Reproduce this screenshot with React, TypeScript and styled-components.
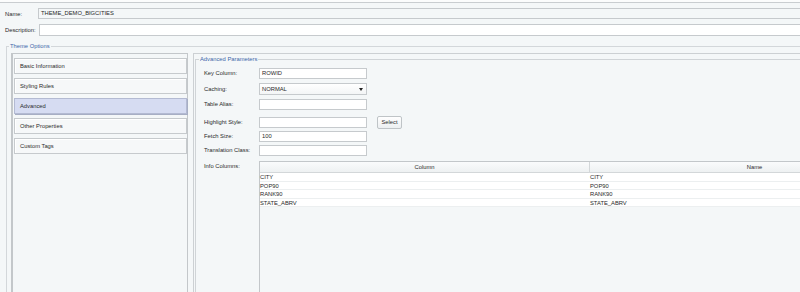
import styled, { createGlobalStyle } from 'styled-components'

const GlobalStyle = createGlobalStyle`
  html, body { margin: 0; padding: 0; background: #f4f7f8; }
  * { box-sizing: border-box; }
`

const FONT = `'Liberation Sans', Arial, sans-serif`
const BORDER = '#c6cacd'
const LEGEND = '#3d65a8'

const TABS = ['Basic Information', 'Styling Rules', 'Advanced', 'Other Properties', 'Custom Tags']
const INFO_ROWS = [
  { column: 'CITY', name: 'CITY' },
  { column: 'POP90', name: 'POP90' },
  { column: 'RANK90', name: 'RANK90' },
  { column: 'STATE_ABRV', name: 'STATE_ABRV' },
]

export default function App() {
  return (
    <>
      <GlobalStyle />
      <Page>
        <TopStrip />

        {/* Header fields */}
        <FieldRow $top={5}>
          <FieldLabel $width={33}>Name:</FieldLabel>
          <TextBox $height={11} $readOnly>THEME_DEMO_BIGCITIES</TextBox>
        </FieldRow>
        <FieldRow $top={5}>
          <FieldLabel $width={34}>Description:</FieldLabel>
          <TextBox $height={12} />
        </FieldRow>

        <ThemeSet>
          <Legend $shift={-2}>Theme Options</Legend>
          <Split>
            <TabList>
              {TABS.map(t => (
                <Tab key={t} $active={t === 'Advanced'}>{t}</Tab>
              ))}
            </TabList>

            <DetailPane>
              <ParamSet>
                <Legend $shift={-5}>Advanced Parameters</Legend>
                <Form>
                  <Label>Key Column:</Label>
                  <Input>ROWID</Input>
                  <span />

                  <Label $h={12}>Caching:</Label>
                  <Dropdown>
                    NORMAL
                    <Caret />
                  </Dropdown>
                  <span />

                  <Label>Table Alias:</Label>
                  <Input />
                  <span />

                  <Label $offset={1}>Highlight Style:</Label>
                  <Input $offset={1} />
                  <Button>Select</Button>

                  <Label>Fetch Size:</Label>
                  <Input>100</Input>
                  <span />

                  <Label>Translation Class:</Label>
                  <Input />
                  <span />

                  <Label>Info Columns:</Label>
                  <Grid>
                    <GridHead>
                      <HeadCell>Column</HeadCell>
                      <HeadCell>Name</HeadCell>
                    </GridHead>
                    {INFO_ROWS.map(r => (
                      <GridRow key={r.column}>
                        <Cell>{r.column}</Cell>
                        <Cell>{r.name}</Cell>
                      </GridRow>
                    ))}
                  </Grid>
                </Form>
              </ParamSet>
            </DetailPane>
          </Split>
        </ThemeSet>
      </Page>
    </>
  )
}

const Page = styled.div`
  width: 800px;
  height: 292px;
  overflow: hidden;
  background: #f4f7f8;
  font-family: ${FONT};
  font-size: 5.8px;
  color: #2a2a2a;
`

const TopStrip = styled.div`
  height: 3px;
  background: #fbfcfc;
  border-bottom: 1px solid #c9cdd0;
`

const FieldRow = styled.div<{ $top: number }>`
  display: flex;
  align-items: center;
  margin-top: ${p => p.$top}px;
  margin-right: -6px;
  padding-left: 5px;
`

const FieldLabel = styled.span<{ $width: number }>`
  width: ${p => p.$width}px;
  flex: none;
  white-space: nowrap;
`

const TextBox = styled.div<{ $height: number; $readOnly?: boolean }>`
  flex: 1;
  height: ${p => p.$height}px;
  line-height: ${p => p.$height - 2}px;
  padding-left: 2px;
  border: 1px solid ${BORDER};
  background: ${p => (p.$readOnly ? '#f4f7f8' : '#ffffff')};
`

const ThemeSet = styled.fieldset`
  margin: 6px -20px 0 6px;
  padding: 3px 0 0 4px;
  border: 1px solid #d3d7da;
  border-bottom: none;
  min-width: 0;
`

const Legend = styled.legend<{ $shift: number }>`
  margin-left: ${p => p.$shift}px;
  padding: 0 1px;
  line-height: 8px;
  color: ${LEGEND};
`

const Split = styled.div`
  display: flex;
  gap: 5px;
  height: 320px;
`

const TabList = styled.div`
  width: 177px;
  flex: none;
  display: flex;
  flex-direction: column;
  gap: 4px;
  padding: 4px 0 0 1px;
  border: 1px solid #c3c7ca;
  border-left-width: 2px;
  background: #f4f7f8;
`

const Tab = styled.div<{ $active?: boolean }>`
  height: 16px;
  line-height: 14px;
  padding-left: 5px;
  border: 1px solid ${p => (p.$active ? '#b3bad2' : BORDER)};
  background: ${p => (p.$active ? '#d6dcf2' : '#f6f8f9')};
  box-shadow: ${p => (p.$active ? '1px 1px 0 #a7aec4' : 'inset 1px 1px 0 #ffffff')};
`

const DetailPane = styled.div`
  flex: 1;
  min-width: 0;
  padding: 1px 0 0 1px;
  border-top: 1px solid #ccd0d3;
  border-left: 1px solid #ccd0d3;
`

const ParamSet = styled.fieldset`
  margin: 0 -40px 0 0;
  padding: 5px 0 0 8px;
  border: 1px solid #d0d4d7;
  border-bottom: none;
  min-width: 0;
  height: 320px;
`

const Form = styled.div`
  display: grid;
  grid-template-columns: 55px 108px auto;
  grid-template-rows: 15px 16px 17px 15px 14px 16px 1fr;
  align-items: start;
  height: 100%;
`

const Label = styled.span<{ $offset?: number; $h?: number }>`
  margin-top: ${p => p.$offset ?? 0}px;
  line-height: ${p => p.$h ?? 11}px;
  white-space: nowrap;
`

const Input = styled.div<{ $offset?: number }>`
  margin-top: ${p => p.$offset ?? 0}px;
  height: 11px;
  line-height: 9px;
  padding-left: 2px;
  border: 1px solid ${BORDER};
  background: #ffffff;
`

const Dropdown = styled.div`
  display: flex;
  align-items: center;
  justify-content: space-between;
  height: 12px;
  padding: 0 3px 0 2px;
  border: 1px solid ${BORDER};
  background: linear-gradient(#ffffff, #f3f5f6);
`

const Caret = styled.span`
  width: 0;
  height: 0;
  border-left: 2.5px solid transparent;
  border-right: 2.5px solid transparent;
  border-top: 3px solid #222;
`

const Button = styled.div`
  margin-left: 10px;
  width: 25px;
  height: 13px;
  line-height: 11px;
  text-align: center;
  border: 1px solid #bfc4c7;
  border-radius: 2px;
  background: linear-gradient(#ffffff, #eceff1);
`

const Grid = styled.div`
  grid-column: 2 / 4;
  width: 662px;
  height: 260px;
  border: 1px solid #c3c7ca;
  border-right: none;
  background: #f4f7f8;
`

const GridHead = styled.div`
  display: grid;
  grid-template-columns: 330px 330px;
  height: 11px;
  border-bottom: 1px solid #d3d7d9;
  background: linear-gradient(#fafbfc, #eef1f2);
`

const HeadCell = styled.div`
  line-height: 10px;
  text-align: center;
  border-right: 1px solid #d3d7d9;
`

const GridRow = styled.div`
  display: grid;
  grid-template-columns: 330px 330px;
  height: 8.5px;
  line-height: 8px;
  background: #ffffff;
  border-bottom: 0.5px solid #eceff0;
`

const Cell = styled.div`
  white-space: nowrap;
`
